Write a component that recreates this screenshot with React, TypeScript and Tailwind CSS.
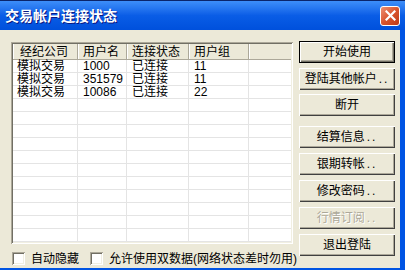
const FONT = '"Liberation Sans", "Noto Sans CJK SC", sans-serif';

type Row = { broker: string; user: string; state: string; group: string };

const rows: Row[] = [
  { broker: '模拟交易', user: '1000', state: '已连接', group: '11' },
  { broker: '模拟交易', user: '351579', state: '已连接', group: '11' },
  { broker: '模拟交易', user: '10086', state: '已连接', group: '22' },
];

const cols = ['w-[65px]', 'w-[49px]', 'w-[62px]', 'w-[60px]'];

function CloseButton() {
  return (
    <div className="w-[20px] h-[20px] rounded-[3px] border border-white bg-gradient-to-br from-[#EC8F72] via-[#D9542D] to-[#BF3A17] flex items-center justify-center">
      <svg width="11" height="11" viewBox="0 0 11 11">
        <path d="M1.5 1.5L9.5 9.5M9.5 1.5L1.5 9.5" stroke="white" strokeWidth="2.2" strokeLinecap="square" />
      </svg>
    </div>
  );
}

function Button({ label, primary, disabled }: { label: string; primary?: boolean; disabled?: boolean }) {
  const dots = label.endsWith('..');
  const text = dots ? label.slice(0, -2) : label;
  return (
    <div
      className={
        'h-[22px] w-[96px] flex items-center justify-center bg-[#ECE9D8] text-[12px] leading-none whitespace-nowrap ' +
        (primary
          ? 'border border-black shadow-[inset_1px_1px_0_#fff,inset_-1px_-1px_0_#716F64,inset_-2px_-2px_0_#ACA899]'
          : 'shadow-[inset_1px_1px_0_#fff,inset_-1px_-1px_0_#404040,inset_-2px_-2px_0_#ACA899]') +
        (disabled ? ' text-[#ACA899] [text-shadow:1px_1px_0_#fff]' : ' text-black')
      }
    >
      {text}
      {dots && <span className="ml-[2px] tracking-[2px]">..</span>}
    </div>
  );
}

function Checkbox({ label }: { label: string }) {
  return (
    <div className="flex items-center shrink-0">
      <div className="w-[13px] h-[13px] shrink-0 bg-white shadow-[inset_1px_1px_0_#ACA899,inset_-1px_-1px_0_#fff,inset_2px_2px_0_#716F64,inset_-2px_-2px_0_#F1EFE2]" />
      <span className="ml-[6px] text-[12px] leading-none text-black whitespace-nowrap">{label}</span>
    </div>
  );
}

export default function App() {
  const empty = Array.from({ length: 12 });
  return (
    <div className="w-[405px] h-[270px] overflow-hidden flex flex-col bg-[#0054E3]" style={{ fontFamily: FONT }}>
      {/* title bar */}
      <div className="h-[30px] shrink-0 flex items-center pl-[5px] pr-[5px] border-t border-[#0A246A] bg-gradient-to-b from-[#3D8EF9] via-[#0A5DE6] to-[#0050DC]">
        <span className="flex-1 text-white font-bold text-[14px] leading-none [text-shadow:1px_1px_0_#0A1883]">
          交易帐户连接状态
        </span>
        <CloseButton />
      </div>

      {/* client */}
      <div className="flex-1 flex pr-[5px] pb-[2px]">
        <div className="flex-1 bg-[#ECE9D8] flex pl-[11px] pt-[12px]">
          <div className="flex flex-col w-[282px] shrink-0">
            <div className="h-[202px] p-[2px] bg-white shadow-[inset_1px_1px_0_#ACA899,inset_-1px_-1px_0_#fff,inset_2px_2px_0_#716F64,inset_-2px_-2px_0_#F1EFE2]">
              <div className="h-full overflow-hidden bg-white text-[12px] leading-none text-black">
                <div className="h-[16px] flex bg-[#ECE9D8] border-b border-[#ACA899]">
                  {['经纪公司', '用户名', '连接状态', '用户组'].map((h, i) => (
                    <div
                      key={h}
                      className={cols[i] + ' h-full flex items-center border-r border-[#ACA899] shadow-[inset_1px_0_0_#fff] ' + (i === 0 ? 'pl-[7px]' : 'pl-[5px]')}
                    >
                      {h}
                    </div>
                  ))}
                  <div className="flex-1 h-full shadow-[inset_1px_0_0_#fff]" />
                </div>
                {rows.map((r, idx) => (
                  <div key={idx} className="h-[13px] flex border-b border-[#E4E4E4]">
                    <div className={cols[0] + ' h-full flex items-center pl-[4px] border-r border-[#E4E4E4]'}>{r.broker}</div>
                    <div className={cols[1] + ' h-full flex items-center pl-[5px] border-r border-[#E4E4E4]'}>{r.user}</div>
                    <div className={cols[2] + ' h-full flex items-center pl-[5px] border-r border-[#E4E4E4]'}>{r.state}</div>
                    <div className={cols[3] + ' h-full flex items-center pl-[5px] border-r border-[#E4E4E4]'}>{r.group}</div>
                    <div className="flex-1" />
                  </div>
                ))}
                {empty.map((_, idx) => (
                  <div key={'e' + idx} className="h-[13px] flex border-b border-[#E4E4E4]">
                    {cols.map((c) => (
                      <div key={c} className={c + ' h-full border-r border-[#E4E4E4]'} />
                    ))}
                    <div className="flex-1" />
                  </div>
                ))}
              </div>
            </div>
            <div className="mt-[8px] flex items-center gap-[11px] pl-[1px]">
              <Checkbox label="自动隐藏" />
              <Checkbox label="允许使用双数据(网络状态差时勿用)" />
            </div>
          </div>

          <div className="ml-[6px] -mt-[1px] flex flex-col">
            <Button label="开始使用" primary />
            <div className="mt-[5px]">
              <Button label="登陆其他帐户.." />
            </div>
            <div className="mt-[4px]">
              <Button label="断开" />
            </div>
            <div className="mt-[10px]">
              <Button label="结算信息.." />
            </div>
            <div className="mt-[5px]">
              <Button label="银期转帐.." />
            </div>
            <div className="mt-[5px]">
              <Button label="修改密码.." />
            </div>
            <div className="mt-[5px]">
              <Button label="行情订阅.." disabled />
            </div>
            <div className="mt-[5px]">
              <Button label="退出登陆" />
            </div>
          </div>
        </div>
      </div>
    </div>
  );
}
